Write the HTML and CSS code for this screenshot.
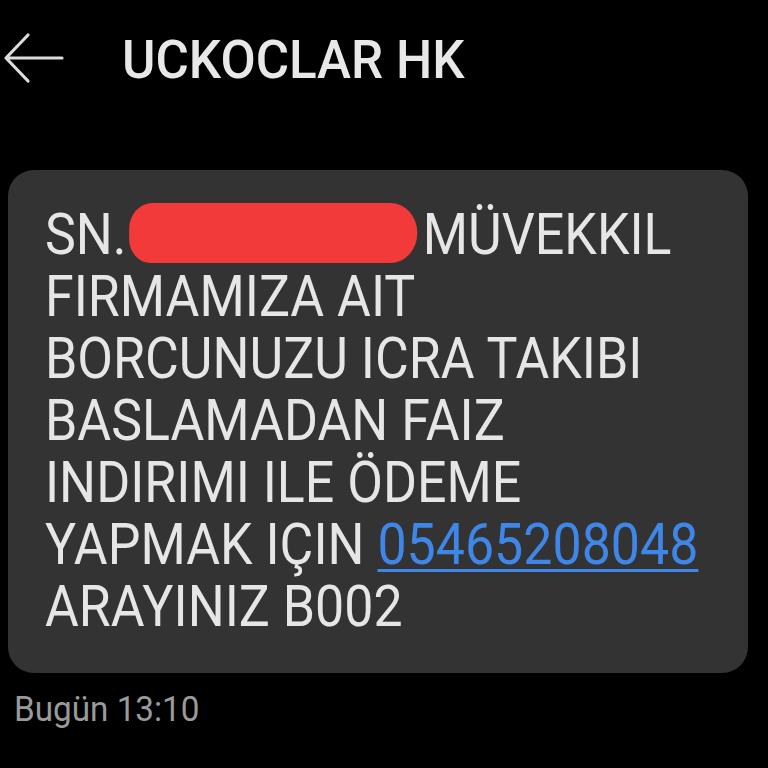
FILE: index.html
```html
<!DOCTYPE html>
<html lang="tr">
<head>
    <meta charset="UTF-8">
    <meta name="viewport" content="width=device-width, initial-scale=1.0">
    <title>UCKOCLAR HK</title>
    <link rel="stylesheet" href="styles.css">
</head>
<body>

    <div class="topbar">
        <svg class="back" width="62" height="54" viewBox="0 0 62 54">
            <path d="M60 27 H4 M26 4 L4 27 L26 50" fill="none" stroke="#dcdcdc" stroke-width="3.2" stroke-linecap="round" stroke-linejoin="round"/>
        </svg>
        <span class="title">UCKOCLAR HK</span>
    </div>

    <div class="thread">
        <div class="bubble">
            <div class="msg">
                <span class="line">SN.<span class="redacted"></span>MÜVEKKIL</span>
                <span class="line">FIRMAMIZA AIT</span>
                <span class="line">BORCUNUZU ICRA TAKIBI</span>
                <span class="line">BASLAMADAN FAIZ</span>
                <span class="line">INDIRIMI ILE ÖDEME</span>
                <span class="line">YAPMAK IÇIN <a class="phone" href="#">05465208048</a></span>
                <span class="line">ARAYINIZ B002</span>
            </div>
        </div>
        <div class="time"><span>Bugün 13:10</span></div>
    </div>

</body>
</html>
```

FILE: styles.css
```css
body {
    margin: 0;
    background: #000;
    font-family: Roboto, "Noto Sans", sans-serif;
    color: #e6e6e6;
    height: 768px;
    overflow: hidden;
}
.topbar {
    display: flex;
    align-items: center;
    height: 118px;
    padding-left: 2px;
}
.back {
    flex: none;
    margin-top: -3px;
}
.title {
    margin-left: 58px;
    font-size: 53px;
    font-weight: 500;
    color: #e8e8e8;
    margin-top: 2px;
    display: inline-block;
    transform: scaleX(0.965);
    transform-origin: left center;
}
.thread {
    padding: 52px 20px 0 8px;
}
.bubble {
    background: #333333;
    border-radius: 26px;
    padding: 33px 20px 36px 37px;
}
.msg {
    font-size: 58px;
    line-height: 62px;
    transform: scaleX(0.895);
    transform-origin: left top;
    white-space: nowrap;
}
.line {
    display: block;
}
.redacted {
    display: inline-block;
    width: 322px;
    height: 60px;
    margin: 0 6px -9px 3px;
    background: #f23a3a;
    border-radius: 26px 30px 30px 24px;
}
.phone {
    color: #3e86e8;
    text-decoration: underline;
    text-decoration-thickness: 3px;
    text-underline-offset: 5px;
}
.time {
    padding: 16px 0 0 6px;
    font-size: 35px;
    color: #9a9a9a;
}
.time span {
    display: inline-block;
    transform: scaleX(0.95);
    transform-origin: left top;
}
```
